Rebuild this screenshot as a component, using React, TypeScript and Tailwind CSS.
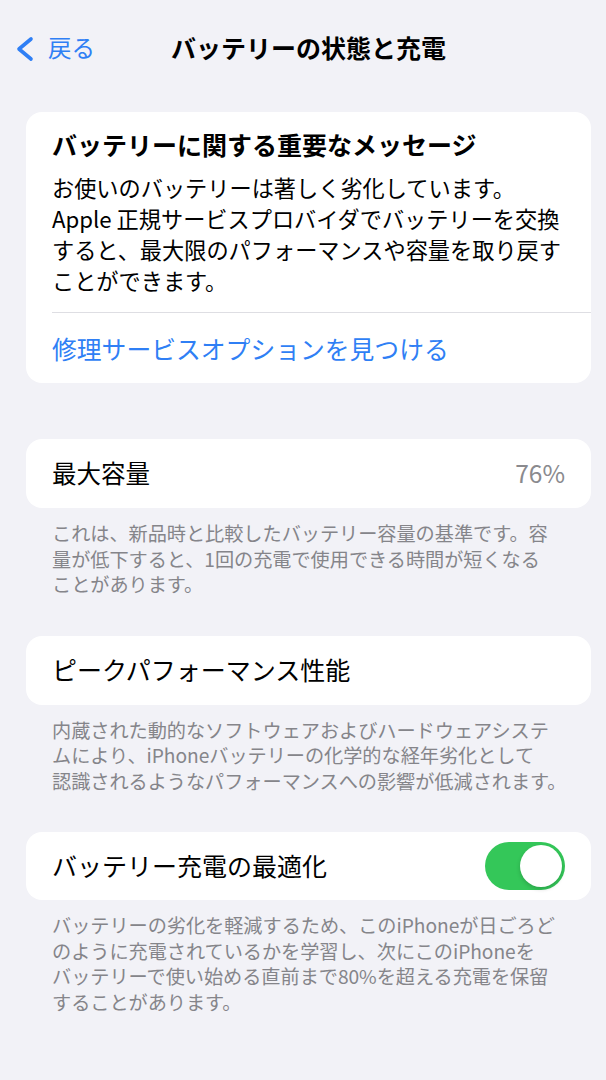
import React from "react";

const font = { fontFamily: '"Noto Sans CJK JP", "Noto Sans", sans-serif' };

function Footer({ lines }: { lines: string[] }) {
  return (
    <p className="mt-[13px] pl-[26px] text-[19.2px] leading-[25.5px] text-[#85858a] whitespace-nowrap tracking-[-0.05px]">
      {lines.map((l, i) => (
        <React.Fragment key={i}>
          {l}
          {i < lines.length - 1 && <br />}
        </React.Fragment>
      ))}
    </p>
  );
}

export default function App() {
  return (
    <div className="min-h-screen w-full overflow-hidden bg-[#f2f2f7]" style={font}>
      <div className="w-[617px]">
        {/* Header */}
        <div className="grid h-[94px] grid-cols-[1fr_auto_1fr] items-center">
          <div className="flex items-center pl-[14px]">
            <svg width="20" height="26" viewBox="0 0 20 26" className="mt-[3px]">
              <polyline
                points="17,3 5,13 17,23"
                fill="none"
                stroke="#2f7ff5"
                strokeWidth="3.6"
                strokeLinecap="round"
                strokeLinejoin="round"
              />
            </svg>
            <span className="ml-[14px] text-[23.5px] leading-[30px] text-[#2f7ff5]">戻る</span>
          </div>
          <h1 className="text-[25px] font-bold leading-[30px] text-black">バッテリーの状態と充電</h1>
          <div />
        </div>

        <div className="px-[26px] pt-[18px] pb-[80px]">
          {/* Card 1 */}
          <div className="rounded-[16px] bg-white">
            <div className="pl-[26px] pt-[17px] pb-[16px]">
              <h2 className="text-[25px] font-bold leading-[30px] text-black">
                バッテリーに関する重要なメッセージ
              </h2>
              <p className="mt-[13px] text-[22.2px] leading-[31px] text-black whitespace-nowrap">
                お使いのバッテリーは著しく劣化しています。
                <br />
                Apple 正規サービスプロバイダでバッテリーを交換
                <br />
                すると、最大限のパフォーマンスや容量を取り戻す
                <br />
                ことができます。
              </p>
            </div>
            <div className="ml-[26px] h-px bg-[#dedee3]" />
            <div className="pl-[26px] pt-[20px] pb-[20px] text-[24.8px] leading-[30px] text-[#2f7ff5]">
              修理サービスオプションを見つける
            </div>
          </div>

          {/* Card 2 */}
          <div className="mt-[56px] flex h-[69px] items-center justify-between rounded-[16px] bg-white pl-[26px] pr-[26px]">
            <span className="text-[24.5px] text-black">最大容量</span>
            <span className="text-[24.5px] text-[#8a8a8e]">76%</span>
          </div>
          <Footer
            lines={[
              "これは、新品時と比較したバッテリー容量の基準です。容",
              "量が低下すると、1回の充電で使用できる時間が短くなる",
              "ことがあります。",
            ]}
          />

          {/* Card 3 */}
          <div className="mt-[38px] flex h-[69px] items-center rounded-[16px] bg-white pl-[26px] pr-[26px]">
            <span className="text-[25px] text-black">ピークパフォーマンス性能</span>
          </div>
          <Footer
            lines={[
              "内蔵された動的なソフトウェアおよびハードウェアシステ",
              "ムにより、iPhoneバッテリーの化学的な経年劣化として",
              "認識されるようなパフォーマンスへの影響が低減されます。",
            ]}
          />

          {/* Card 4 */}
          <div className="mt-[38px] flex h-[68px] items-center justify-between rounded-[16px] bg-white pl-[26px] pr-[26px]">
            <span className="text-[25px] text-black">バッテリー充電の最適化</span>
            <div className="flex h-[48px] w-[80px] items-center justify-end rounded-full bg-[#34c759] pr-[3px]">
              <div className="h-[42px] w-[42px] rounded-full bg-white shadow-[0_2px_4px_rgba(0,0,0,0.18)]" />
            </div>
          </div>
          <Footer
            lines={[
              "バッテリーの劣化を軽減するため、このiPhoneが日ごろど",
              "のように充電されているかを学習し、次にこのiPhoneを",
              "バッテリーで使い始める直前まで80%を超える充電を保留",
              "することがあります。",
            ]}
          />
        </div>
      </div>
    </div>
  );
}
